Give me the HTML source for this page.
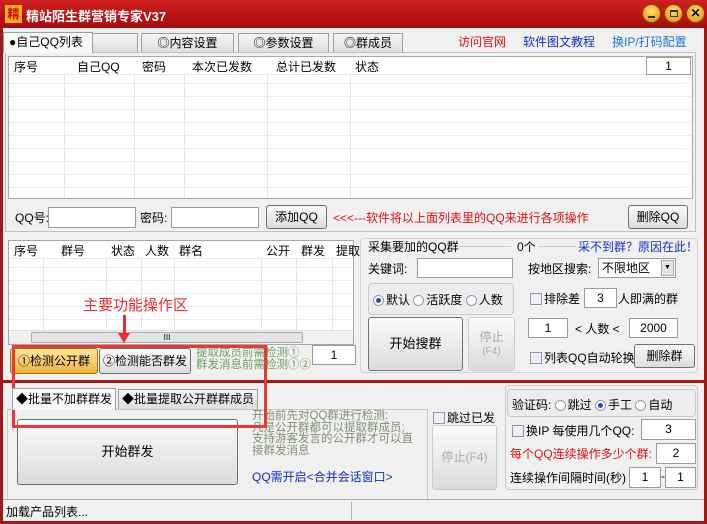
<!DOCTYPE html>
<html><head><meta charset="utf-8"><style>
*{box-sizing:border-box;margin:0;padding:0}
body{width:707px;height:524px;overflow:hidden;background:#a01818;font-family:"Liberation Sans","Noto Sans CJK SC","WenQuanYi Zen Hei",sans-serif;font-size:12px;color:#000;position:relative}
.a{position:absolute;white-space:nowrap}
#win{position:absolute;left:3px;top:28px;width:701px;height:493px;background:#f0f0f0}
.title{left:0;top:0;width:707px;height:28px;background:linear-gradient(#d02020,#a80c0c)}
.inp{position:absolute;background:#fff;border:1px solid #9a9a9a;text-align:center;line-height:18px}
.btn{position:absolute;border:1px solid #707070;border-radius:3px;background:linear-gradient(#fafafa,#dcdcdc);text-align:center;white-space:nowrap}
.tab{position:absolute;top:5px;height:19px;border:1px solid #a0a0a0;border-bottom:none;background:linear-gradient(#f4f4f4,#dedede);text-align:center;line-height:18px;white-space:nowrap;overflow:hidden}
.grid{position:absolute;background-color:#fff;border:1px solid #a8a8a8;
background-image:linear-gradient(#ececec 1px,transparent 1px);background-size:100% 13px}
.hdr{position:absolute;left:0;top:0;right:0;height:18px;background:#fff;border-bottom:1px solid #e8e8e8}
.col{position:absolute;top:0;bottom:0;border-left:1px solid #e6e6e6}
.chk{display:inline-block;width:12px;height:12px;border:1px solid #8a9ab0;background:#eef;vertical-align:-2px;margin-right:2px}
.rad{display:inline-block;width:11px;height:11px;border:1px solid #8a9ab0;border-radius:50%;background:#fff;vertical-align:-2px;margin-right:2px;position:relative}
.rad.on:after{content:"";position:absolute;left:2px;top:2px;width:5px;height:5px;border-radius:50%;background:#2050b0}
.grp{position:absolute;border:1px solid #c8c8c8;border-radius:4px;background:#ececec}
</style></head><body>
<div class="a title"></div>
<div class="a" style="left:5px;top:5px;width:17px;height:18px;background:#f0b010;color:#c00;font-size:12px;font-weight:bold;line-height:18px;text-align:center">精</div>
<div class="a" style="left:26px;top:6px;color:#fff;font-weight:bold;font-size:13px">精站陌生群营销专家V37</div>
<div class="a" style="left:642px;top:4px;width:19px;height:19px;border-radius:50%;background:radial-gradient(circle at 50% 35%,#ffe070,#e08a00);border:1px solid #8a4a00"><div style="position:absolute;left:5px;top:11px;width:7px;height:2px;background:#333"></div></div>
<div class="a" style="left:664px;top:4px;width:19px;height:19px;border-radius:50%;background:radial-gradient(circle at 50% 35%,#ffe070,#e08a00);border:1px solid #8a4a00"><div style="position:absolute;left:5px;top:5px;width:8px;height:7px;border:1px solid #333;border-top-width:2px"></div></div>
<div class="a" style="left:686px;top:4px;width:19px;height:19px;border-radius:50%;background:radial-gradient(circle at 50% 35%,#ffe070,#e08a00);border:1px solid #8a4a00;text-align:center;font-weight:bold;line-height:17px;font-size:12px">✕</div>
<div id="win">
<div class="tab" style="left:0;width:90px;top:4px;height:21px;background:#f8f8f8;z-index:2;text-align:left;padding-left:5px">●自己QQ列表</div>
<div class="tab" style="left:89px;width:46px"></div>
<div class="tab" style="left:138px;width:93px">◎内容设置</div>
<div class="tab" style="left:235px;width:91px">◎参数设置</div>
<div class="tab" style="left:330px;width:70px">◎群成员</div>
<div class="a" style="left:455px;top:5px;color:#e01010">访问官网</div>
<div class="a" style="left:520px;top:5px;color:#1030c0">软件图文教程</div>
<div class="a" style="left:609px;top:5px;color:#1878d0">换IP/打码配置</div>
<div class="a" style="left:2px;top:24px;width:691px;height:180px;border:1px solid #c0c0c0"></div>
<div class="grid" style="left:5px;top:28px;width:685px;height:143px">
<div class="col" style="left:55px"></div><div class="col" style="left:125px"></div><div class="col" style="left:175px"></div><div class="col" style="left:258px"></div><div class="col" style="left:341px"></div>
<div class="hdr"><span class="a" style="left:5px;top:1px">序号</span><span class="a" style="left:68px;top:1px">自己QQ</span><span class="a" style="left:133px;top:1px">密码</span><span class="a" style="left:183px;top:1px">本次已发数</span><span class="a" style="left:267px;top:1px">总计已发数</span><span class="a" style="left:346px;top:1px">状态</span>
<div class="inp" style="left:637px;top:0;width:45px;height:18px;line-height:16px">1</div></div>
</div>
<div class="a" style="left:12px;top:181px">QQ号:</div>
<div class="inp" style="left:45px;top:179px;width:88px;height:21px"></div>
<div class="a" style="left:137px;top:181px">密码:</div>
<div class="inp" style="left:168px;top:179px;width:88px;height:21px"></div>
<div class="btn" style="left:263px;top:177px;width:61px;height:24px;line-height:22px">添加QQ</div>
<div class="a" style="left:330px;top:181px;color:#e01010">&lt;&lt;&lt;---软件将以上面列表里的QQ来进行各项操作</div>
<div class="btn" style="left:625px;top:177px;width:60px;height:24px;line-height:22px">删除QQ</div>
<div class="grid" style="left:5px;top:212px;width:346px;height:105px">
<div class="col" style="left:34px"></div><div class="col" style="left:97px"></div><div class="col" style="left:132px"></div><div class="col" style="left:165px"></div><div class="col" style="left:252px"></div><div class="col" style="left:287px"></div><div class="col" style="left:323px"></div>
<div class="hdr"><span class="a" style="left:5px;top:1px">序号</span><span class="a" style="left:52px;top:1px">群号</span><span class="a" style="left:102px;top:1px">状态</span><span class="a" style="left:136px;top:1px">人数</span><span class="a" style="left:170px;top:1px">群名</span><span class="a" style="left:257px;top:1px">公开</span><span class="a" style="left:292px;top:1px">群发</span><span class="a" style="left:327px;top:1px">提取</span></div>
<div class="a" style="left:0;bottom:0;width:344px;height:14px;background:#f0f0f0;border-top:1px solid #ddd"><div class="a" style="left:22px;top:1px;width:272px;height:11px;background:#e4e4e4;border:1px solid #aaa;border-radius:2px;text-align:center;font-size:8px;line-height:9px">III</div></div>
</div>
<div class="a" style="left:80px;top:266px;color:#e03030;font-size:15px">主要功能操作区</div>
<div class="a" style="left:120px;top:287px;width:3px;height:20px;background:#e03030"></div>
<div class="a" style="left:115px;top:305px;width:0;height:0;border-left:6px solid transparent;border-right:6px solid transparent;border-top:10px solid #e03030"></div>
<div class="btn" style="left:7px;top:320px;width:88px;height:26px;line-height:24px;background:linear-gradient(#ffe8a0,#f0b040);border-color:#b07010">①检测公开群</div>
<div class="btn" style="left:96px;top:320px;width:92px;height:26px;line-height:24px">②检测能否群发</div>
<div class="a" style="left:193px;top:319px;color:#70a060;line-height:12px;font-size:11.5px">提取成员前需检测①<br>群发消息前需检测①②</div>
<div class="inp" style="left:309px;top:317px;width:44px;height:20px">1</div>
<div class="grp" style="left:357px;top:210px;width:338px;height:135px;background:#f0f0f0;border-color:#d0d0d0"></div>
<div class="a" style="left:365px;top:210px">采集要加的QQ群</div>
<div class="a" style="left:456px;top:218px;width:52px;height:1px;background:#ccc"></div>
<div class="a" style="left:514px;top:210px">0个</div>
<div class="a" style="left:535px;top:218px;width:38px;height:1px;background:#ccc"></div>
<div class="a" style="left:575px;top:210px;color:#1030c0">采不到群？原因在此！</div>
<div class="a" style="left:365px;top:232px">关键词:</div>
<div class="inp" style="left:414px;top:230px;width:96px;height:20px"></div>
<div class="a" style="left:525px;top:232px">按地区搜索:</div>
<div class="inp" style="left:595px;top:230px;width:78px;height:20px;text-align:left;padding-left:3px">不限地区<span class="a" style="right:1px;top:1px;width:13px;height:16px;background:#e4e4e4;border:1px solid #aaa;font-size:7px;line-height:14px;text-align:center">▼</span></div>
<div class="grp" style="left:365px;top:255px;width:146px;height:32px"></div>
<div class="a" style="left:370px;top:263px"><span class="rad on"></span>默认 <span class="rad"></span>活跃度 <span class="rad"></span>人数</div>
<div class="a" style="left:527px;top:262px"><span class="chk"></span>排除差</div>
<div class="inp" style="left:581px;top:260px;width:33px;height:20px">3</div>
<div class="a" style="left:615px;top:262px">人即满的群</div>
<div class="btn" style="left:365px;top:289px;width:95px;height:54px;line-height:52px;font-size:13px">开始搜群</div>
<div class="btn" style="left:465px;top:289px;width:47px;height:54px;color:#aaa;border-color:#ccc;line-height:13px;padding-top:13px">停止<br><span style="font-size:10px">(F4)</span></div>
<div class="inp" style="left:525px;top:290px;width:40px;height:20px">1</div>
<div class="a" style="left:572px;top:292px">&lt; 人数 &lt;</div>
<div class="inp" style="left:626px;top:290px;width:49px;height:20px">2000</div>
<div class="a" style="left:527px;top:321px"><span class="chk"></span>列表QQ自动轮换</div>
<div class="btn" style="left:631px;top:316px;width:61px;height:24px;line-height:22px">删除群</div>
<div class="a" style="left:-3px;top:352px;width:707px;height:3px;background:#a01818"></div>
<div class="tab" style="left:9px;top:360px;width:104px;height:22px;background:#fafafa;z-index:2;line-height:21px">◆批量不加群群发</div>
<div class="tab" style="left:115px;top:361px;width:140px;height:20px">◆批量提取公开群群成员</div>
<div class="a" style="left:4px;top:381px;width:421px;height:100px;border:1px solid #c8c8c8"></div>
<div class="btn" style="left:14px;top:391px;width:221px;height:66px;line-height:64px;font-size:13px">开始群发</div>
<div class="a" style="left:249px;top:383px;color:#809070;line-height:11.5px;font-size:11.5px">开始前先对QQ群进行检测:<br>凡是公开群都可以提取群成员;<br>支持游客发言的公开群才可以直<br>接群发消息</div>
<div class="a" style="left:249px;top:440px;color:#1030c0">QQ需开启&lt;合并会话窗口&gt;</div>
<div class="a" style="left:430px;top:381px"><span class="chk"></span>跳过已发</div>
<div class="btn" style="left:429px;top:397px;width:65px;height:65px;line-height:63px;color:#aaa;border-color:#ccc">停止(F4)</div>
<div class="grp" style="left:502px;top:357px;width:193px;height:105px;background:#f0f0f0"></div>
<div class="grp" style="left:504px;top:361px;width:189px;height:28px"></div>
<div class="a" style="left:509px;top:368px">验证码: <span class="rad"></span>跳过 <span class="rad on"></span>手工 <span class="rad"></span>自动</div>
<div class="a" style="left:509px;top:394px"><span class="chk"></span>换IP 每使用几个QQ:</div>
<div class="inp" style="left:638px;top:391px;width:55px;height:21px">3</div>
<div class="a" style="left:507px;top:417px;color:#e01010">每个QQ连续操作多少个群:</div>
<div class="inp" style="left:653px;top:415px;width:40px;height:21px">2</div>
<div class="a" style="left:507px;top:441px">连续操作间隔时间(秒)</div>
<div class="inp" style="left:626px;top:439px;width:32px;height:21px">1</div>
<div class="a" style="left:658px;top:441px">-</div>
<div class="inp" style="left:662px;top:439px;width:31px;height:21px">1</div>
<div class="a" style="left:9px;top:317px;width:255px;height:83px;border:3px solid #e83838"></div>
<div class="a" style="left:0;top:471px;width:701px;height:22px;border-top:1px solid #b0b0b0;background:#f0f0f0"></div>
<div class="a" style="left:348px;top:474px;width:1px;height:18px;background:#b0b0b0"></div>
<div class="a" style="left:3px;top:475px">加载产品列表...</div>
</div>
</body></html>
